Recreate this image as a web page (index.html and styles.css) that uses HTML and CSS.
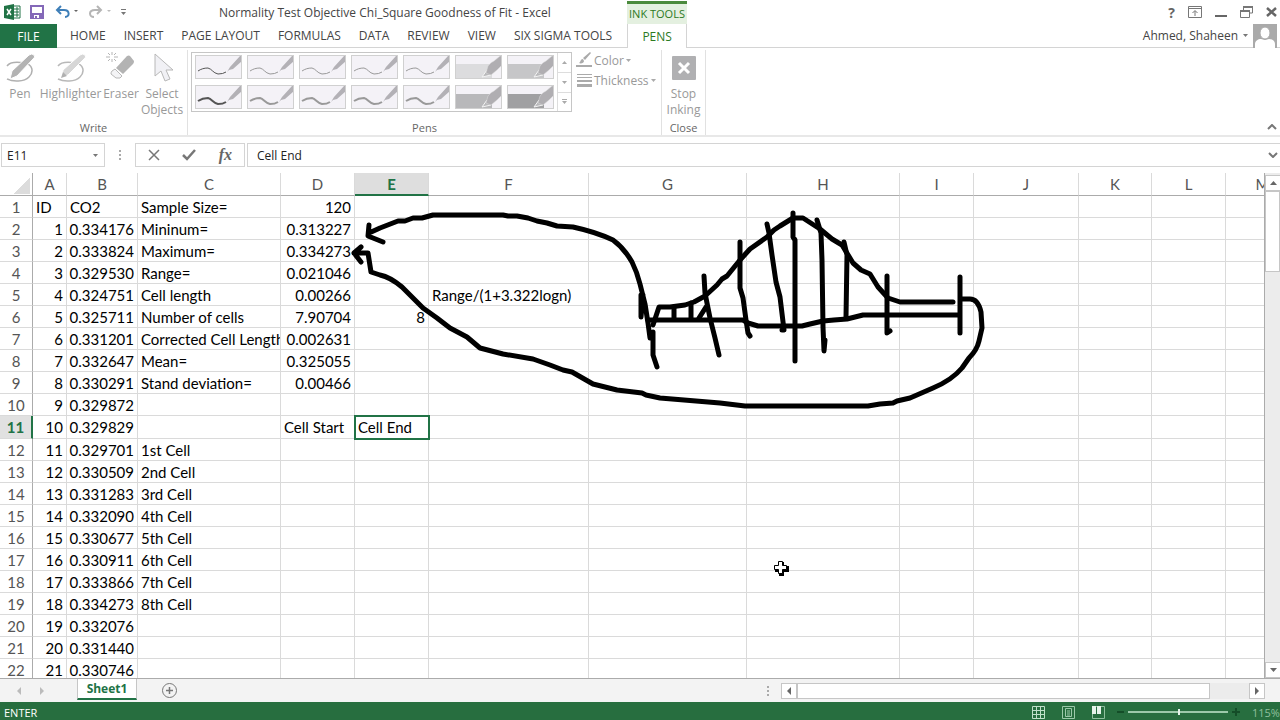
FILE: index.html
```
<!DOCTYPE html>
<html lang="en">
<head>
    <meta charset="UTF-8">
    <title>Normality Test Objective Chi_Square Goodness of Fit - Excel</title>
    <link rel="stylesheet" href="styles.css">
</head>
<body>
<!-- shared shapes for the pen gallery -->
<svg class="defs" width="0" height="0">
    <symbol id="pen-line" viewBox="0 0 47 24">
        <path d="M3 16C6 14 9 13 13 13C17 14 18 18 23 19Q28 19 31 17" fill="none" stroke="currentColor"/>
        <path d="M32 17L35 12L45 1h2v5L38 14L34 15Z" fill="#b3b1b6"/>
    </symbol>
    <symbol id="pen-marker" viewBox="0 0 47 24">
        <rect x="1" y="9" width="36" height="14" fill="currentColor"/>
        <path d="M27 22L32 15L36 20Z" fill="#b8b8ba" stroke="#f4f4f4"/>
        <path d="M31 18L33 11Q36 7 39 6L45 1h2v9L42 15L36 20Z" fill="#b0aeb2" stroke="#ddd" stroke-width=".5"/>
    </symbol>
</svg>

<header>
    <div class="titlebar">
        <div class="quick">
            <svg width="17" height="16" viewBox="0 0 17 16">
                <path d="M9 2h7v12H9z" fill="#fff" stroke="#217346"/>
                <path d="M10 5h5M10 8h5M10 11h5M13 3v10" stroke="#217346"/>
                <path d="M0 2L10 0v16L0 14z" fill="#217346"/>
                <path d="M3 5l4 6M7 5l-4 6" stroke="#fff" stroke-width="1.5"/>
            </svg>
            <button class="save" aria-label="Save">
                <svg width="14" height="14" viewBox="0 0 14 14">
                    <path d="M1 1h12v12H1z" fill="#fff" stroke="#8468b8" stroke-width="2"/>
                    <path d="M1 8h12v5H1z" fill="#8468b8"/>
                    <path d="M4 10h5v3H4z" fill="#fff"/>
                    <path d="M5 11h2v2H5z" fill="#8468b8"/>
                </svg>
            </button>
            <button class="undo" aria-label="Undo">
                <svg width="24" height="14" viewBox="0 0 24 14">
                    <path d="M6 1L2 5l4 4M2 5h7c6 0 6 7 1 7" fill="none" stroke="#3f7fb8" stroke-width="2"/>
                    <path d="M19 5h4l-2 2z" fill="#666"/>
                </svg>
            </button>
            <button class="redo" aria-label="Redo">
                <svg width="24" height="14" viewBox="0 0 24 14">
                    <path d="M9 1l4 4-4 4M13 5H7c-7 0-6 7-1 7" fill="none" stroke="#b5b5b5" stroke-width="2"/>
                    <path d="M19 5h4l-2 2z" fill="#bbb"/>
                </svg>
            </button>
            <button aria-label="Customize Quick Access Toolbar">
                <svg width="5" height="14" viewBox="0 0 5 14"><path d="M0 4h5v1H0zM0 7h5l-2.500 3z" fill="#777"/></svg>
            </button>
        </div>
        <h1>Normality Test Objective Chi_Square Goodness of Fit - Excel</h1>
        <div class="context">INK TOOLS</div>
        <div class="window-buttons">
            <button class="help" aria-label="Help">?</button>
            <button aria-label="Ribbon Display Options">
                <svg width="14" height="12" viewBox="0 0 14 12"><path d="M.5.5h13v11H.5zM.5 2.500h13M7 10V5M4.500 7L7 4.500 9.500 7" fill="none" stroke="#777"/></svg>
            </button>
            <button aria-label="Minimize">
                <svg width="12" height="12" viewBox="0 0 12 12"><path d="M0 10h12" stroke="#666" stroke-width="2"/></svg>
            </button>
            <button aria-label="Restore">
                <svg width="13" height="12" viewBox="0 0 13 12"><path d="M3.500 4V1h9v6h-3M.5 5h9v6.500h-9z" fill="none" stroke="#777"/><path d="M3 1h10M0 5h10" stroke="#777" stroke-width="2"/></svg>
            </button>
            <button aria-label="Close">
                <svg width="11" height="12" viewBox="0 0 11 12"><path d="M1 2l9 8M10 2l-9 8" stroke="#666" stroke-width="2.500"/></svg>
            </button>
        </div>
    </div>

    <nav class="tabs">
        <button class="tab file">FILE</button>
        <button class="tab">HOME</button>
        <button class="tab">INSERT</button>
        <button class="tab">PAGE LAYOUT</button>
        <button class="tab">FORMULAS</button>
        <button class="tab">DATA</button>
        <button class="tab">REVIEW</button>
        <button class="tab">VIEW</button>
        <button class="tab">SIX SIGMA TOOLS</button>
        <button class="tab current">PENS</button>
        <button class="user">
            Ahmed, Shaheen
            <svg class="arrow" width="5" height="3" viewBox="0 0 5 3"><path d="M0 0h5L2.500 3z"/></svg>
            <svg width="24" height="24" viewBox="0 0 24 24">
                <path d="M0 0h24v24H0z" fill="#aaa"/>
                <path d="M2 24v-4c0-3 3-5 6-5l4 1 4-1c3 0 6 2 6 5v4z" fill="#fff"/>
                <ellipse cx="12" cy="9" rx="5" ry="6" fill="#fff" stroke="#aaa"/>
            </svg>
        </button>
    </nav>

    <div class="ribbon">
        <section class="group write">
            <div class="tools">
                <button class="tool pen">
                    <svg width="32" height="32" viewBox="0 0 32 32">
                        <path d="M3 16C6 12 14 12 20 13C29 14 30 22 25 27C20 32 9 32 3 29" fill="none" stroke="#b0b0b0" stroke-width="1.500"/>
                        <path d="M6 29L8 21L25 5Q28 3 30 5T29 9L13 26Z" fill="#b3b3b3" stroke="#fff"/>
                    </svg>
                    Pen
                </button>
                <button class="tool highlighter">
                    <svg width="32" height="32" viewBox="0 0 32 32">
                        <path d="M3 16C6 12 14 12 20 13C29 14 30 22 25 27C20 32 9 32 3 29" fill="none" stroke="#b8b8b8" stroke-width="1.500"/>
                        <path d="M7 27L8 20L25 5Q28 3 30 5T29 9L13 25Z" fill="#d6d6d6" stroke="#fff"/>
                        <path d="M6 28l2-6 4 4z" fill="#b0b0b0"/>
                    </svg>
                    Highlighter
                </button>
                <button class="tool eraser">
                    <svg width="32" height="32" viewBox="0 0 32 32">
                        <path d="M7 2v3M7 9v3M1 7h4M9 7h4M3 3l2 2M9 9l2 2M11 3L9 5M5 9l-2 2" stroke="#b5b5b5"/>
                        <path d="M11 18L22 6Q24 5 25 6L29 11Q29 13 28 14L18 24Z" fill="#b3b3b3"/>
                        <path d="M10 19L17 26L15 28H11L6 24Q6 22 7 21Z" fill="#f4f4f6" stroke="#b8b8b8"/>
                    </svg>
                    Eraser
                </button>
                <button class="tool select">
                    <svg width="32" height="32" viewBox="0 0 32 32">
                        <path d="M9 4v22l6-5 4 10 5-2-4-9h7z" fill="#f1f1f5" stroke="#b8b8b8"/>
                    </svg>
                    Select<br>Objects
                </button>
            </div>
            <h2>Write</h2>
        </section>
        <section class="group pens">
            <div class="tools">
                <div class="gallery">
                    <div class="swatches" id="swatches"></div>
                    <div class="gallery-scroll">
                        <button aria-label="Previous pens"><svg width="5" height="3" viewBox="0 0 5 3"><path d="M0 3h5L2.500 0z"/></svg></button>
                        <button aria-label="Next pens"><svg width="5" height="3" viewBox="0 0 5 3"><path d="M0 0h5L2.500 3z"/></svg></button>
                        <button aria-label="More pens"><svg width="5" height="5" viewBox="0 0 5 5"><path d="M0 0h5v1H0zM0 2h5L2.500 5z"/></svg></button>
                    </div>
                </div>
                <div class="options">
                    <button>
                        <svg width="16" height="16" viewBox="0 0 16 16">
                            <path d="M0 13h16v2H0z" fill="#aaa"/>
                            <path d="M3 11c2-1 1-4 4-4l1 2c0 2-3 3-5 2zM7 6l7-6 1 1-6 7z" fill="#aaa"/>
                        </svg>
                        Color
                        <svg class="arrow" width="5" height="3" viewBox="0 0 5 3"><path d="M0 0h5L2.500 3z"/></svg>
                    </button>
                    <button>
                        <svg width="16" height="16" viewBox="0 0 16 16">
                            <path d="M1 2h15v1H1zM1 5h15v1H1zM1 8h15v2H1zM1 12h15v3H1z" fill="#aaa"/>
                        </svg>
                        Thickness
                        <svg class="arrow" width="5" height="3" viewBox="0 0 5 3"><path d="M0 0h5L2.500 3z"/></svg>
                    </button>
                </div>
            </div>
            <h2>Pens</h2>
        </section>
        <section class="group close">
            <div class="tools">
                <button class="tool stop">
                    <svg width="32" height="32" viewBox="0 0 32 32">
                        <rect x="4" y="6" width="24" height="24" rx="1" fill="#b0b0b2"/>
                        <path d="M11 13l10 10M21 13L11 23" stroke="#fff" stroke-width="3"/>
                    </svg>
                    Stop<br>Inking
                </button>
            </div>
            <h2>Close</h2>
        </section>
        <button class="collapse" aria-label="Collapse the Ribbon">
            <svg width="10" height="6" viewBox="0 0 10 6"><path d="M1 5l4-4 4 4" fill="none" stroke="#777" stroke-width="2"/></svg>
        </button>
    </div>
</header>

<div class="formula-bar">
    <div class="namebox">
        <input type="text" value="E11" aria-label="Name Box">
        <svg class="arrow" width="5" height="3" viewBox="0 0 5 3"><path d="M0 0h5L2.500 3z"/></svg>
    </div>
    <svg class="grip" width="2" height="10" viewBox="0 0 2 10"><path d="M0 0h2v2H0zM0 4h2v2H0zM0 8h2v2H0z"/></svg>
    <div class="edit-buttons">
        <button aria-label="Cancel"><svg width="12" height="12" viewBox="0 0 12 12"><path d="M1 1l10 10M11 1L1 11" stroke="#777" stroke-width="1.500"/></svg></button>
        <button aria-label="Enter"><svg width="14" height="12" viewBox="0 0 14 12"><path d="M1 6l4 4 8-9" fill="none" stroke="#777" stroke-width="2.500"/></svg></button>
        <button class="fx" aria-label="Insert Function">fx</button>
    </div>
    <div class="formula">
        <input type="text" value="Cell End" aria-label="Formula Bar">
        <svg width="10" height="6" viewBox="0 0 10 6"><path d="M1 1l4 4 4-4" fill="none" stroke="#777" stroke-width="2"/></svg>
    </div>
</div>

<main>
    <div class="sheet">
        <table id="grid"></table>
        <svg class="ink" width="1300" height="507" viewBox="0 173 1300 507">
            <!-- arrow to the minimum -->
            <path d="M369 225L368 236L383 242M369 233L380 228L398 221L405 221L413 218L422 218L433 215H503L508 216L517 216L528 218L537 221L547 223L557 226L573 227Q596 232 613 240Q624 248 632 262Q637 272 640 284L645 304L648 323L650 338M643 295L641 317V295M653 332L653 355L657 367"/>
            <!-- arrow to the maximum -->
            <path d="M361 247L354 253L361 262M354 253H368L371 272L380 275Q390 277 402 287L423 308L437 318L450 328L467 337L480 348L503 354L533 359L550 365L563 370L572 372L593 384L617 390L642 393L646 395L660 398L720 403L745 406H868L880 404L893 403L897 401L910 398L933 388Q952 380 962 368L969 358Q977 350 979 341L982 328L981 312Q978 299 970 299H962M960 277V333"/>
            <!-- bell curve and its base -->
            <path d="M648 320H743L748 323L758 326H802L810 324L823 321L834 320L847 319L855 317L863 315H959"/>
            <path d="M653 325L656 316L659 307H670L685 305L694 302L705 296L717 285L722 279L727 276L740 260L750 249L767 237L774 230L780 226L793 218H803L820 229L832 239L842 245L853 263L861 270L870 274L878 287L888 298L900 302H953"/>
            <!-- cell limits -->
            <path d="M674 307V319M691 303V319M706 307L699 318M704 276L705 293L710 318L715 338L719 355"/>
            <path d="M740 242V288L743 298L746 320L748 333L750 336M767 224L769 233L772 255L776 282L780 297L784 330H782M793 213L793 237L795 240V361M817 220L821 233L822 260L823 327L824 351L825 340M844 242L847 255L846 317M887 276V333L890 331"/>
        </svg>
        <svg class="cursor" width="16" height="16" viewBox="0 0 16 16">
            <path d="M6 2h5v4h5v6h-5v4H6v-4H2V6h4z"/>
            <path d="M5.500 1.500h4v4h4v4h-4v4h-4v-4h-4v-4h4z" fill="#fff" stroke="#000"/>
        </svg>
    </div>
    <div class="vscroll">
        <button aria-label="Scroll up"><svg width="7" height="4" viewBox="0 0 7 4"><path d="M0 4h7L3.500 0z"/></svg></button>
        <div class="thumb"></div>
        <button class="down" aria-label="Scroll down"><svg width="7" height="4" viewBox="0 0 7 4"><path d="M0 0h7L3.500 4z"/></svg></button>
    </div>
</main>

<div class="sheet-bar">
    <button class="step" aria-label="Previous sheet"><svg width="4" height="8" viewBox="0 0 4 8"><path d="M4 0v8L0 4z"/></svg></button>
    <button class="step" aria-label="Next sheet"><svg width="4" height="8" viewBox="0 0 4 8"><path d="M0 0v8l4-4z"/></svg></button>
    <button class="sheet-tab">Sheet1</button>
    <button class="add" aria-label="New sheet">
        <svg width="15" height="15" viewBox="0 0 15 15"><path d="M7.500 4v7M4 7.500h7" stroke="#777" stroke-width="1.500"/><circle cx="7.500" cy="7.500" r="7" fill="none" stroke="#777"/></svg>
    </button>
    <svg class="grip" width="2" height="10" viewBox="0 0 2 10"><path d="M0 0h2v2H0zM0 4h2v2H0zM0 8h2v2H0z"/></svg>
    <div class="hscroll">
        <button aria-label="Scroll left"><svg width="4" height="8" viewBox="0 0 4 8"><path d="M4 0v8L0 4z"/></svg></button>
        <div class="thumb"></div>
        <button class="right" aria-label="Scroll right"><svg width="4" height="8" viewBox="0 0 4 8"><path d="M0 0v8l4-4z"/></svg></button>
    </div>
</div>

<footer>
    <span class="mode">ENTER</span>
    <div class="views">
        <button aria-label="Normal"><svg width="13" height="13" viewBox="0 0 13 13"><path d="M.5.5h12v12H.5zM4.500 0v13M8.500 0v13M0 4.500h13M0 8.500h13" fill="none" stroke="#bfe0c9"/></svg></button>
        <button aria-label="Page Layout"><svg width="13" height="13" viewBox="0 0 13 13"><path d="M.5.5h12v12H.5zM3.500 2.500h6v8h-6zM5 5h3M5 7h3M5 9h3" fill="none" stroke="#9cc9aa"/></svg></button>
        <button aria-label="Page Break Preview"><svg width="13" height="13" viewBox="0 0 13 13"><path d="M.5.500h12v12H.5z" fill="none" stroke="#8fc09e"/><path d="M0 0h4v8H0zM5 0h4v8H5z" fill="#e6f3ea"/></svg></button>
    </div>
    <div class="zoom">
        <button aria-label="Zoom Out"><svg width="7" height="7" viewBox="0 0 7 7"><path d="M0 3h7" stroke="#144d28" stroke-width="2"/></svg></button>
        <input type="range" min="0" max="200" value="102" aria-label="Zoom">
        <button aria-label="Zoom In"><svg width="8" height="8" viewBox="0 0 8 8"><path d="M0 4h8M4 0v8" stroke="#144d28" stroke-width="2"/></svg></button>
        <span class="percent">115%</span>
    </div>
</footer>

<script>
    var columns = "ABCDEFGHIJKLM".split(""),
        co2 = ["334176", "333824", "329530", "324751", "325711", "331201", "332647", "330291", "329872", "329829", "329701",
            "330509", "331283", "332090", "330677", "330911", "333866", "334273", "332076", "331440", "330746"],
        cells = {
            A1: "ID", B1: "CO2",
            C1: "Sample Size=", D1: 120,
            C2: "Mininum=", D2: "0.313227",
            C3: "Maximum=", D3: "0.334273",
            C4: "Range=", D4: "0.021046",
            C5: "Cell length", D5: "0.00266", F5: "Range/(1+3.322logn)",
            C6: "Number of cells", D6: "7.90704", E6: 8,
            C7: "Corrected Cell Length", D7: "0.002631",
            C8: "Mean=", D8: "0.325055",
            C9: "Stand deviation=", D9: "0.00466",
            D11: "Cell Start",
            C12: "1st Cell", C13: "2nd Cell", C14: "3rd Cell", C15: "4th Cell",
            C16: "5th Cell", C17: "6th Cell", C18: "7th Cell", C19: "8th Cell"
        },
        swatches = document.getElementById("swatches"),
        html, value, row, i;

    for (i = 0; i < co2.length; i++) {
        cells["A" + (i + 2)] = i + 1;
        cells["B" + (i + 2)] = "0." + co2[i];
    }

    html = "<colgroup><col class='col-head'>";
    columns.forEach(function (name) {
        html += "<col class='col-" + name.toLowerCase() + "'>";
    });
    html += "</colgroup><tr><th class='corner'></th>";
    columns.forEach(function (name) {
        html += "<th" + (name === "E" ? " class='active'" : "") + ">" + name + "</th>";
    });
    html += "</tr>";

    for (row = 1; row <= 22; row++) {
        html += "<tr" + (row === 11 ? " class='active-row'" : "") + "><th>" + row + "</th>";
        columns.forEach(function (name) {
            value = cells[name + row];
            if (name + row === "E11") {
                html += "<td class='editing'><input type='text' value='Cell End' aria-label='E11'></td>";
            } else if (value === undefined) {
                html += "<td></td>";
            } else {
                html += "<td" + (isNaN(value) ? "" : " class='num'") + ">" + value + "</td>";
            }
        });
        html += "</tr>";
    }
    document.getElementById("grid").innerHTML = html;

    for (i = 0; i < 14; i++) {
        value = i % 7 < 5 ? "pen-line" : "pen-marker";
        swatches.innerHTML += "<button class='swatch " + value + (i < 7 ? " thin" : " thick") +
            "' aria-label='Pen " + (i + 1) + "'><svg width='47' height='24'><use href='#" + value + "'/></svg></button>";
    }
</script>
</body>
</html>
```

FILE: styles.css
```
* {
    box-sizing: border-box;
}

body {
    margin: 0;
    height: 100vh;
    display: flex;
    flex-direction: column;
    overflow: hidden;
    background-color: #fff;
    color: #444;
    font-family: "Open Sans", "Noto Sans", sans-serif;
    font-size: 12px;
}

button, input {
    margin: 0;
    padding: 0;
    border: 0;
    background: none;
    color: inherit;
    font: inherit;
}

svg {
    display: block;
    flex: none;
}

h1, h2 {
    margin: 0;
    font-size: 12px;
    font-weight: normal;
}

.defs {
    position: absolute;
}

.arrow {
    fill: #777;
}

.grip {
    fill: #aaa;
}

/* title bar */

.titlebar {
    height: 24px;
    display: flex;
    align-items: center;
}

.quick {
    width: 219px;
    padding-left: 4px;
    display: flex;
    align-items: center;
    gap: 9px;
}

.quick .undo {
    margin-left: 2px;
}

.titlebar h1 {
    width: 408px;
    white-space: nowrap;
}

.context {
    width: 60px;
    height: 23px;
    align-self: flex-end;
    border-top: 3px solid #4a8a3c;
    background-color: #e4f0e0;
    color: #2c7a1f;
    font-size: 11px;
    line-height: 19px;
    text-align: center;
    white-space: nowrap;
}

.window-buttons {
    margin-left: auto;
    padding-right: 3px;
    display: flex;
    align-items: center;
    gap: 13px;
}

.help {
    font-size: 14px;
    font-weight: bold;
    color: #666;
}

/* tabs */

.tabs {
    height: 24px;
    display: flex;
    border-bottom: 1px solid #d4d4d4;
}

.tab {
    padding: 0 9px;
    white-space: nowrap;
}

.file {
    width: 57px;
    height: 24px;
    margin-right: 4px;
    background-color: #217346;
    color: #fff;
}

.current {
    width: 60px;
    height: 24px;
    margin-left: 6px;
    border: 1px solid #d4d4d4;
    border-width: 0 1px;
    background-color: #fff;
    color: #2c7a1f;
}

.user {
    margin-left: auto;
    padding-right: 3px;
    display: flex;
    align-items: center;
    gap: 5px;
}

/* ribbon */

.ribbon {
    height: 89px;
    display: flex;
    border-bottom: 2px solid #e8e8e8;
    color: #999;
}

.group {
    margin-top: 2px;
    display: flex;
    flex-direction: column;
    border-right: 1px solid #e1e1e1;
}

.group h2 {
    margin-top: auto;
    color: #666;
    font-size: 11px;
    line-height: 14px;
    text-align: center;
}

.write {
    width: 188px;
}

.pens {
    width: 474px;
}

.close {
    width: 44px;
}

.tools {
    display: flex;
}

.tool {
    display: flex;
    flex-direction: column;
    align-items: center;
    line-height: 16px;
    text-align: center;
}

.tool svg {
    margin-bottom: 4px;
}

.pen {
    width: 40px;
}

.highlighter {
    width: 61px;
}

.eraser {
    width: 40px;
}

.select {
    width: 42px;
}

.stop {
    width: 43px;
}

.gallery {
    margin: 2px 4px 0 3px;
    display: flex;
    border: 1px solid #c6c6c6;
}

.swatches {
    padding: 2px 3px;
    display: grid;
    grid-template-columns: repeat(7, 47px);
    gap: 6px 5px;
}

.swatch {
    height: 24px;
    background-color: #f4f2f7;
    outline: 1px solid #d0d0d0;
    outline-offset: -1px;
}

.pen-line.thin {
    color: #999;
    stroke-width: 1px;
}

.pen-line.thick {
    color: #999;
    stroke-width: 2px;
}

.pen-line.thin:first-child, .pen-line.thick:nth-child(8) {
    color: #555;
}

.pen-marker.thin {
    color: #dcdcde;
}

.pen-marker.thick {
    color: #b8b8ba;
}

.pen-marker:nth-child(7) {
    color: #c6c6c8;
}

.pen-marker:nth-child(14) {
    color: #a0a0a2;
}

.gallery-scroll {
    width: 14px;
    display: grid;
    grid-template-rows: repeat(3, 1fr);
    border-left: 1px solid #ddd;
    fill: #aaa;
}

.gallery-scroll button {
    display: grid;
    place-items: center;
}

.gallery-scroll button + button {
    border-top: 1px solid #ddd;
}

.options button {
    height: 20px;
    display: flex;
    align-items: center;
    gap: 2px;
}

.options .arrow {
    fill: #aaa;
}

.collapse {
    margin: auto 3px 5px auto;
}

/* formula bar */

.formula-bar {
    height: 36px;
    padding: 6px 0 6px 1px;
    display: flex;
    align-items: center;
    color: #222;
}

.namebox, .edit-buttons, .formula {
    height: 24px;
    display: flex;
    align-items: center;
    border: 1px solid #d4d4d4;
}

.namebox {
    width: 104px;
    padding: 0 6px 0 5px;
    justify-content: space-between;
}

.namebox input {
    width: 86px;
}

.formula-bar .grip {
    margin: 0 14px;
}

.edit-buttons {
    width: 110px;
    padding: 0 12px;
    justify-content: space-between;
}

.fx {
    color: #666;
    font: italic bold 16px "Liberation Serif", serif;
}

.formula {
    flex: 1;
    margin-left: 2px;
    padding: 0 2px 0 9px;
    border-right: 0;
}

.formula input {
    flex: 1;
}

/* sheet */

main {
    flex: 1;
    min-height: 0;
    display: flex;
    border-bottom: 1px solid #ababab;
}

.sheet {
    position: relative;
    flex: 1;
    overflow: hidden;
    border-right: 1px solid #ababab;
}

table {
    width: 1300px;
    table-layout: fixed;
    border-collapse: separate;
    border-spacing: 0;
    color: #000;
    font-family: Lato, sans-serif;
    font-size: 15px;
}

th, td {
    height: 22px;
    padding: 0 3px;
    overflow: hidden;
    border: 1px solid #dadada;
    border-width: 0 1px 1px 0;
    line-height: 20px;
    text-align: left;
    white-space: nowrap;
}

td.num {
    padding: 0 3px 0 0;
    text-align: right;
}

th {
    padding: 0;
    color: #555;
    font-weight: normal;
    text-align: center;
}

th:first-child {
    border-right-color: #ababab;
}

tr:first-child th {
    height: 23px;
    border-bottom-color: #ababab;
}

.corner {
    background: linear-gradient(135deg, transparent 50%, #dcdcdc 50%) 14px 5px / 16px 16px no-repeat;
}

tr:first-child .active {
    border-bottom: 2px solid #217346;
    background-color: #dedede;
    color: #217346;
    font-weight: bold;
}

.active-row th {
    height: 23px;
    border-right: 2px solid #217346;
    background-color: #e1e1e1;
    color: #217346;
    font-weight: bold;
}

.editing {
    padding: 0;
    outline: 2px solid #217346;
    outline-offset: -1px;
}

.editing input {
    width: 100%;
    padding-left: 3px;
    display: block;
}

.col-head { width: 33px; }
.col-a { width: 34px; }
.col-b { width: 71px; }
.col-c { width: 143px; }
.col-d { width: 74px; }
.col-e { width: 74px; }
.col-f { width: 160px; }
.col-g { width: 158px; }
.col-h { width: 153px; }
.col-i { width: 74px; }
.col-j { width: 105px; }
.col-k { width: 73px; }
.col-l { width: 74px; }
.col-m { width: 74px; }

.ink {
    position: absolute;
    top: 0;
    left: 0;
    fill: none;
    stroke: #000;
    stroke-width: 5;
    stroke-linecap: round;
    stroke-linejoin: round;
    pointer-events: none;
}

.cursor {
    position: absolute;
    top: 387px;
    left: 773px;
}

/* scroll bars */

.vscroll, .hscroll {
    display: flex;
    background-color: #ececec;
    fill: #666;
}

.vscroll {
    width: 15px;
    padding-top: 2px;
    flex-direction: column;
}

.vscroll button, .hscroll button {
    width: 16px;
    height: 16px;
    flex: none;
    display: grid;
    place-items: center;
    border: 1px solid #c6c6c6;
    background-color: #fff;
}

.thumb {
    border: 1px solid #c6c6c6;
    background-color: #fff;
}

.vscroll .thumb {
    height: 81px;
}

.down {
    margin-top: auto;
}

.sheet-bar {
    height: 23px;
    padding: 0 15px;
    display: flex;
    align-items: center;
    background-color: #f3f3f3;
}

.step {
    width: 8px;
    margin-right: 15px;
    display: grid;
    place-items: center;
    fill: #bbb;
}

.sheet-tab {
    width: 60px;
    height: 21px;
    margin: 0 25px 0 16px;
    align-self: flex-start;
    border: 1px solid #c6c6c6;
    border-top: 0;
    border-bottom: 2px solid #217346;
    background-color: #fff;
    color: #217346;
    font-weight: bold;
}

.sheet-bar .grip {
    margin: 0 12px 0 auto;
}

.hscroll {
    width: 484px;
}

.hscroll .thumb {
    width: 413px;
}

.right {
    margin-left: auto;
}

/* status bar */

footer {
    height: 18px;
    padding: 2px 0 0 4px;
    display: flex;
    align-items: center;
    gap: 12px;
    background-color: #276e3f;
    color: #fff;
    font-size: 11px;
}

.mode {
    margin-right: auto;
}

.views {
    display: flex;
    gap: 17px;
}

.zoom {
    display: flex;
    align-items: center;
    gap: 4px;
}

.zoom input {
    width: 100px;
    height: 8px;
    appearance: none;
    background: linear-gradient(#9cc9aa, #9cc9aa) center / 100% 2px no-repeat;
}

.zoom input::-webkit-slider-thumb {
    appearance: none;
    width: 2px;
    height: 6px;
    background-color: #e6f3ea;
}

.percent {
    width: 28px;
    margin-left: 8px;
    color: #8fc09e;
}
```
